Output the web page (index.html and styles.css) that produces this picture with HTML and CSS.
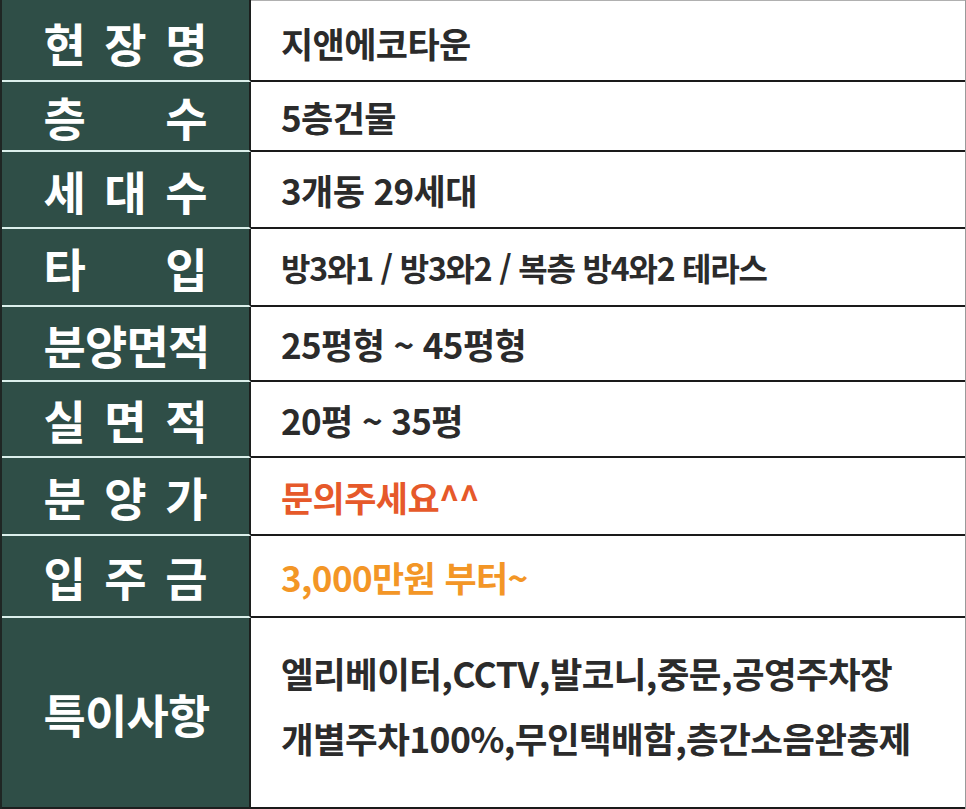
FILE: index.html
```html
<!DOCTYPE html>
<html lang="ko">
<head>
<meta charset="utf-8">
<title>지앤에코타운</title>
<link rel="stylesheet" href="styles.css">
</head>
<body>
<div class="sheet">
  <div class="row r1">
    <div class="label"><span class="lt">현 장 명</span></div>
    <div class="value">지앤에코타운</div>
  </div>
  <div class="row r2">
    <div class="label"><span class="lt">층 수</span></div>
    <div class="value">5층건물</div>
  </div>
  <div class="row r3">
    <div class="label"><span class="lt">세 대 수</span></div>
    <div class="value">3개동 29세대</div>
  </div>
  <div class="row r4">
    <div class="label"><span class="lt">타 입</span></div>
    <div class="value tight">방3와1 / 방3와2 / 복층 방4와2 테라스</div>
  </div>
  <div class="row r5">
    <div class="label"><span class="lt">분양면적</span></div>
    <div class="value">25평형 ~ 45평형</div>
  </div>
  <div class="row r6">
    <div class="label"><span class="lt">실 면 적</span></div>
    <div class="value">20평 ~ 35평</div>
  </div>
  <div class="row r7">
    <div class="label"><span class="lt">분 양 가</span></div>
    <div class="value red">문의주세요^^</div>
  </div>
  <div class="row r8">
    <div class="label"><span class="lt">입 주 금</span></div>
    <div class="value orange">3,000만원 부터~</div>
  </div>
  <div class="row r9 last">
    <div class="label"><span class="lt">특이사항</span></div>
    <div class="value multi">
      <div class="line">엘리베이터,CCTV,발코니,중문,공영주차장</div>
      <div class="line">개별주차100%,무인택배함,층간소음완충제</div>
    </div>
  </div>
</div>
</body>
</html>
```

FILE: styles.css
```css
html, body {
  margin: 0;
  padding: 0;
  background: #ffffff;
}

.sheet {
  width: 966px;
  height: 809px;
  box-sizing: border-box;
  display: flex;
  flex-direction: column;
  border-left: 2px solid #1f2624;
  border-right: 1px solid #9a9a9a;
  font-family: "Noto Sans CJK KR", "Noto Sans", sans-serif;
}

.row {
  display: flex;
  box-sizing: border-box;
}

.r1 { height: 82px; }
.r2 { height: 70px; }
.r3 { height: 77px; }
.r4 { height: 78px; }
.r5 { height: 75px; }
.r6 { height: 76px; }
.r7 { height: 78px; }
.r8 { height: 82px; }
.r9 { height: 191px; }

.label {
  width: 249px;
  flex: none;
  box-sizing: border-box;
  background: #2f4e47;
  border-right: 2px solid #1c1f1e;
  border-bottom: 2px solid #dcefeb;
  display: flex;
  align-items: center;
  justify-content: center;
}

.lt {
  display: block;
  width: 164px;
  color: #ffffff;
  font-size: 46px;
  font-weight: 700;
  line-height: 1;
  text-align: justify;
  text-align-last: justify;
  white-space: nowrap;
}

.r5 .lt, .r9 .lt {
  text-align: center;
  text-align-last: center;
  letter-spacing: -0.8px;
}

.value {
  flex: 1;
  box-sizing: border-box;
  border-bottom: 2px solid #1a1a1a;
  display: flex;
  align-items: center;
  padding-left: 30px;
  color: #2b2b2b;
  font-family: "Noto Sans CJK KR", "Noto Sans", sans-serif;
  font-size: 35px;
  font-weight: 700;
  line-height: 1;
  letter-spacing: -0.6px;
  white-space: nowrap;
}

.value.tight {
  font-size: 32px;
  letter-spacing: -1.2px;
}

.r1 .value {
  border-top: 1px solid #b0b0b0;
}

.r1 .label, .r1 .value {
  padding-top: 4px;
}

.value.red {
  color: #e6592a;
}

.value.orange {
  color: #f39626;
}

.value.multi {
  flex-direction: column;
  align-items: flex-start;
  justify-content: center;
  padding-bottom: 16px;
  font-size: 35.5px;
  letter-spacing: -0.6px;
}

.line {
  line-height: 65px;
}

.last .label {
  border-bottom: 2px solid #1c1f1e;
}
```
